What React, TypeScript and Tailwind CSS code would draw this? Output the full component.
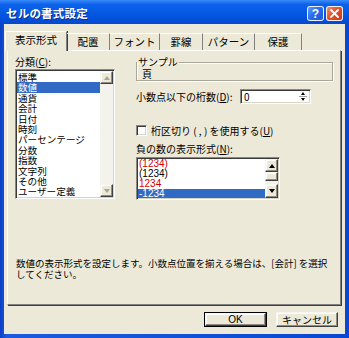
import React from 'react';

const categories = [
  '標準',
  '数値',
  '通貨',
  '会計',
  '日付',
  '時刻',
  'パーセンテージ',
  '分数',
  '指数',
  '文字列',
  'その他',
  'ユーザー定義',
];

const negatives = [
  { text: '(1234)', red: true, selected: false },
  { text: '(1234)', red: false, selected: false },
  { text: '1234', red: true, selected: false },
  { text: '-1234', red: false, selected: true },
];

const tabs = [
  { label: '配置', w: 'w-[43px]' },
  { label: 'フォント', w: 'w-[50px]' },
  { label: '罫線', w: 'w-[43px]' },
  { label: 'パターン', w: 'w-[52px]' },
  { label: '保護', w: 'w-[47px]' },
];

// classic 3D borders
const sunken =
  'border border-t-[#8a877c] border-l-[#8a877c] border-r-white border-b-white shadow-[inset_1px_1px_0_#3a3a3a,inset_-1px_-1px_0_#d8d5c8] p-px';
const raised =
  'bg-[#ECE9D8] border border-t-[#f6f5ef] border-l-[#f6f5ef] border-r-[#404040] border-b-[#404040] shadow-[inset_-1px_-1px_0_#8f8d84,inset_1px_1px_0_#ffffff]';

function Arrow({ dir, disabled }: { dir: 'up' | 'down'; disabled?: boolean }) {
  const color = disabled ? 'border-b-[#a7a59c]' : 'border-b-black';
  const colorDown = disabled ? 'border-t-[#a7a59c]' : 'border-t-black';
  return dir === 'up' ? (
    <span className={`w-0 h-0 border-x-[3.5px] border-x-transparent border-b-[4px] ${color}`} />
  ) : (
    <span className={`w-0 h-0 border-x-[3.5px] border-x-transparent border-t-[4px] ${colorDown}`} />
  );
}

function CaptionButton({ kind }: { kind: 'help' | 'close' }) {
  const bg =
    kind === 'help'
      ? 'bg-[linear-gradient(135deg,#5f9bff_0%,#2a6ef0_45%,#1b55d8_100%)]'
      : 'bg-[linear-gradient(135deg,#f28a6b_0%,#e2552a_45%,#c8391a_100%)]';
  return (
    <div
      className={`w-[17px] h-[15px] rounded-[3px] border border-white/90 ${bg} flex items-center justify-center`}
    >
      {kind === 'help' ? (
        <span className="text-white font-bold text-[12px] leading-none font-['Liberation_Sans',sans-serif]">?</span>
      ) : (
        <svg width="9" height="9" viewBox="0 0 9 9">
          <path d="M1 1 L8 8 M8 1 L1 8" stroke="white" strokeWidth="1.8" strokeLinecap="square" />
        </svg>
      )}
    </div>
  );
}

export default function App() {
  return (
    <div className="w-[349px] h-[338px] flex flex-col overflow-hidden bg-[linear-gradient(90deg,#0a3fc4_0%,#1c5be0_2%,#0847d2_100%)] font-['Noto_Sans_CJK_JP',sans-serif] text-black">
      {/* title bar */}
      <div className="h-[24px] shrink-0 flex items-center pt-[3px] pl-[6px] pr-[6px] bg-[linear-gradient(180deg,#3d8bf9_0%,#0c63ea_18%,#0558e2_55%,#0349d1_100%)]">
        <span className="text-white font-bold text-[11.5px] leading-none tracking-[0.2px] [text-shadow:1px_1px_0_#0a2f8a]">
          セルの書式設定
        </span>
        <div className="ml-auto flex gap-[2px]">
          <CaptionButton kind="help" />
          <CaptionButton kind="close" />
        </div>
      </div>

      {/* body */}
      <div className="flex-1 mx-[4px] mb-[4px] bg-[#ECE9D8] flex flex-col">
        {/* tab strip */}
        <div className="h-[26px] shrink-0 flex items-end pl-[1px] relative z-10">
          <div className="w-[62px] h-[20px] -mb-px bg-[#ECE9D8] border-t border-l border-t-white border-l-white border-r border-r-[#808080] shadow-[1px_0_0_#404040] flex items-center justify-center text-[10.5px] leading-none pb-[2px]">
            表示形式
          </div>
          {tabs.map((t) => (
            <div
              key={t.label}
              className={`${t.w} h-[17px] border-t border-t-white border-r border-r-[#808080] flex items-center justify-center text-[10.5px] leading-none`}
            >
              {t.label}
            </div>
          ))}
        </div>

        {/* tab panel */}
        <div className="ml-[3px] mr-[4px] h-[255px] shrink-0 border border-t-white border-l-white border-r-[#808080] border-b-[#808080] shadow-[1px_1px_0_#404040] flex flex-col text-[10px] leading-[12px]">
          <div className="flex items-start">
            {/* left column */}
            <div className="ml-[7px] mt-[5px] w-[100px] flex flex-col">
              <div className="h-[12px] whitespace-nowrap">
                分類(<span className="underline">C</span>):
              </div>
              <div className={`mt-[1px] h-[130px] bg-white ${sunken} flex`}>
                <div className="flex-1 flex flex-col overflow-hidden pt-px">
                  {categories.map((c, i) => (
                    <div
                      key={c}
                      className={`h-[10.4px] leading-[10.4px] text-[9.6px] pl-[1px] whitespace-nowrap ${
                        i === 1 ? 'bg-[#316AC5] text-white' : ''
                      }`}
                    >
                      {c}
                    </div>
                  ))}
                </div>
                <div className="w-[13px] flex flex-col bg-[#f3f2ec]">
                  <div className={`h-[13px] ${raised} flex items-center justify-center`}>
                    <Arrow dir="up" disabled />
                  </div>
                  <div className="flex-1" />
                  <div className={`h-[13px] ${raised} flex items-center justify-center`}>
                    <Arrow dir="down" disabled />
                  </div>
                </div>
              </div>
            </div>

            {/* right column */}
            <div className="ml-[21px] mt-[6px] w-[197px] flex flex-col">
              <fieldset className="h-[24px] border border-[#a9a79c] shadow-[inset_1px_1px_0_#ffffff,1px_1px_0_#ffffff] pl-[5px]">
                <legend className="px-px ml-[-5px] text-[10px] leading-[10px]">サンプル</legend>
                <div className="leading-[12px] mt-[1px]">頁</div>
              </fieldset>

              <div className="mt-[8px] h-[15px] flex items-center">
                <div className="w-[104px] whitespace-nowrap">
                  小数点以下の桁数(<span className="underline">D</span>):
                </div>
                <div className={`w-[71px] h-[15px] bg-white ${sunken} flex items-center`}>
                  <span className="flex-1 pl-[2px] leading-none">0</span>
                  <div className="w-[12px] h-full flex flex-col items-center justify-center gap-[1px]">
                    <span className="w-0 h-0 border-x-[2.5px] border-x-transparent border-b-[3px] border-b-black" />
                    <span className="w-[8px] h-px bg-[#a0a0a0]" />
                    <span className="w-0 h-0 border-x-[2.5px] border-x-transparent border-t-[3px] border-t-black" />
                  </div>
                </div>
              </div>

              <div className="mt-[21px] flex items-center h-[11px]">
                <div className={`w-[11px] h-[11px] bg-white ${sunken}`} />
                <span className="ml-[4px] whitespace-nowrap">
                  桁区切り ( , ) を使用する(<span className="underline">U</span>)
                </span>
              </div>

              <div className="mt-[7px] h-[12px] whitespace-nowrap">
                負の数の表示形式(<span className="underline">N</span>):
              </div>
              <div className={`mt-[2px] w-[144px] h-[43px] bg-white ${sunken} flex`}>
                <div className="flex-1 flex flex-col overflow-hidden">
                  {negatives.map((n, i) => (
                    <div
                      key={i}
                      className={`h-[10px] leading-[10px] pl-[1px] font-['Liberation_Sans',sans-serif] text-[10px] ${
                        n.selected ? 'bg-[#316AC5] text-white' : n.red ? 'text-[#d20000]' : ''
                      }`}
                    >
                      {n.text}
                    </div>
                  ))}
                </div>
                <div className="w-[13px] flex flex-col bg-[#f3f2ec]">
                  <div className={`h-[13px] ${raised} flex items-center justify-center`}>
                    <Arrow dir="up" />
                  </div>
                  <div className={`h-[9px] ${raised}`} />
                  <div className="flex-1" />
                  <div className={`h-[14px] ${raised} flex items-center justify-center`}>
                    <Arrow dir="down" />
                  </div>
                </div>
              </div>
            </div>
          </div>

          {/* description */}
          <div className="ml-[8px] mt-[58px] text-[9.5px] leading-[11px] whitespace-nowrap">
            数値の表示形式を設定します。小数点位置を揃える場合は、[会計] を選択
            <br />
            してください。
          </div>
        </div>

        {/* buttons */}
        <div className="mt-[7px] flex justify-end gap-[9px] pr-[7px]">
          <button className="w-[63px] h-[15px] border border-black p-0 flex">
            <span className={`flex-1 ${raised} flex items-center justify-center text-[10px] leading-none font-['Liberation_Sans',sans-serif]`}>
              OK
            </span>
          </button>
          <button className={`w-[62px] h-[15px] ${raised} flex items-center justify-center text-[10px] leading-none`}>
            キャンセル
          </button>
        </div>
      </div>
    </div>
  );
}
